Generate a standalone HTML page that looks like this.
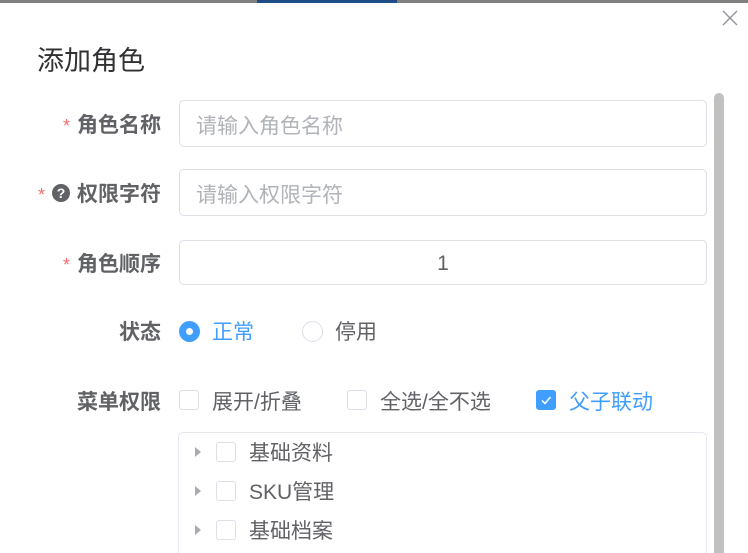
<!DOCTYPE html>
<html><head><meta charset="utf-8"><style>
*{box-sizing:border-box;margin:0;padding:0}
html,body{width:748px;height:553px;overflow:hidden}
body{background:#fff;font-family:"Liberation Sans","Noto Sans CJK SC",sans-serif;position:relative}
.a{position:absolute}
.lbl{position:absolute;right:587px;font-size:21px;font-weight:bold;color:#606266;white-space:nowrap;line-height:26px}
.star{color:#f56c6c;margin-right:7px;font-weight:normal;font-size:18px}
.inp{position:absolute;left:179px;width:528px;border:1px solid #dcdfe6;border-radius:5px;font-size:21px;color:#b0b3b8;padding-left:16px;padding-top:3px;display:flex;align-items:center}
.cb{position:absolute;width:20px;height:20px;border:1px solid #dcdfe6;border-radius:3px;background:#fff}
.t{position:absolute;font-size:21px;color:#606266;line-height:26px;white-space:nowrap}
.tri{position:absolute;width:0;height:0;border-left:6px solid #a8abb2;border-top:5px solid transparent;border-bottom:5px solid transparent}
</style></head><body>
<div class="a" style="left:0;top:0;width:748px;height:3px;background:#808080"></div>
<div class="a" style="left:257px;top:0;width:140px;height:3px;background:#1f4e86"></div>
<svg class="a" style="left:722px;top:10px" width="16" height="16"><path d="M1 1L15 15M15 1L1 15" stroke="#909399" stroke-width="1.4"/></svg>
<div class="a" style="left:37px;top:44px;font-size:27px;color:#303133;line-height:34px">添加角色</div>
<div class="a" style="left:714px;top:93px;width:10px;height:460px;background:#c1c1c1;border-radius:5px 5px 0 0"></div>

<div class="lbl" style="top:113px"><span class="star">*</span>角色名称</div>
<div class="inp" style="top:100px;height:47px">请输入角色名称</div>

<div class="lbl" style="top:182px"><span class="star">*</span><span style="display:inline-block;width:18px;height:18px;border-radius:50%;background:#606266;color:#fff;font-size:14px;line-height:18px;text-align:center;vertical-align:3px;margin-right:7px">?</span>权限字符</div>
<div class="inp" style="top:169px;height:47px">请输入权限字符</div>

<div class="lbl" style="top:252px"><span class="star">*</span>角色顺序</div>
<div class="inp" style="top:240px;height:45px;justify-content:center;padding-left:0;color:#606266">1</div>

<div class="lbl" style="top:320px">状态</div>
<div class="a" style="left:179px;top:321px;width:21px;height:21px;border-radius:50%;background:#409eff"><div class="a" style="left:7px;top:7px;width:7px;height:7px;border-radius:50%;background:#fff"></div></div>
<div class="t" style="left:212px;top:320px;color:#409eff">正常</div>
<div class="a" style="left:302px;top:321px;width:21px;height:21px;border-radius:50%;border:1px solid #dcdfe6"></div>
<div class="t" style="left:335px;top:320px">停用</div>

<div class="lbl" style="top:390px">菜单权限</div>
<div class="cb" style="left:179px;top:390px"></div>
<div class="t" style="left:212px;top:390px">展开/折叠</div>
<div class="cb" style="left:347px;top:390px"></div>
<div class="t" style="left:380px;top:390px">全选/全不选</div>
<div class="cb" style="left:536px;top:390px;background:#409eff;border-color:#409eff"><svg width="18" height="18" style="position:absolute;left:0;top:0"><path d="M5 9.5L8 12.5L13.5 6" fill="none" stroke="#fff" stroke-width="1.5"/></svg></div>
<div class="t" style="left:569px;top:390px;color:#409eff">父子联动</div>

<div class="a" style="left:178px;top:432px;width:529px;height:140px;border:1px solid #e4e7ed;border-radius:5px"></div>
<div class="tri" style="left:195px;top:447px"></div><div class="cb" style="left:216px;top:442px"></div><div class="t" style="left:249px;top:441px">基础资料</div>
<div class="tri" style="left:195px;top:486px"></div><div class="cb" style="left:216px;top:481px"></div><div class="t" style="left:249px;top:480px">SKU管理</div>
<div class="tri" style="left:195px;top:525px"></div><div class="cb" style="left:216px;top:520px"></div><div class="t" style="left:249px;top:519px">基础档案</div>
</body></html>
